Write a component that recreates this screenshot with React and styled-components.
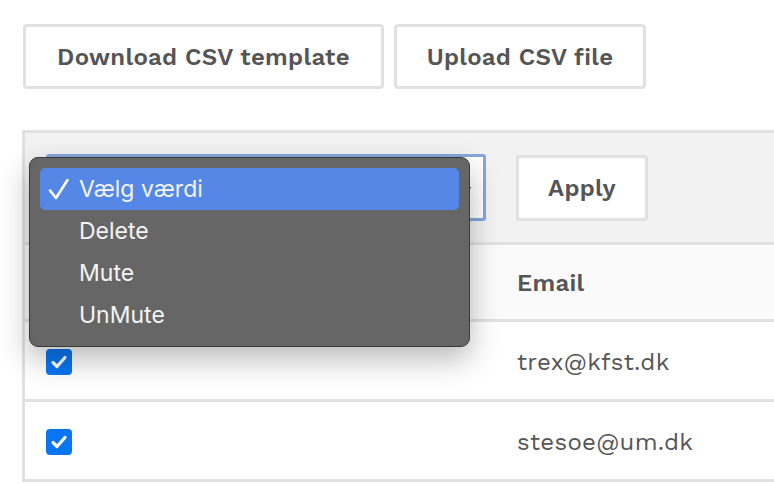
import React from "react";
import styled, { createGlobalStyle } from "styled-components";

const GlobalStyle = createGlobalStyle`
  html, body {
    margin: 0;
    padding: 0;
    background: #fff;
    overflow: hidden;
  }
  * {
    box-sizing: border-box;
  }
`;

const actions = ["Vælg værdi", "Delete", "Mute", "UnMute"];
const emails = ["trex@kfst.dk", "stesoe@um.dk"];

const App = () => {
  return (
    <Page>
      <GlobalStyle />
      <ButtonRow>
        <Button $w={361}>Download CSV template</Button>
        <Button $w={252}>Upload CSV file</Button>
      </ButtonRow>
      <Table>
        <Toolbar>
          <SelectBox>
            <Chevron viewBox="0 0 10 10">
              <path d="M2 4l3 3 3-3" fill="none" stroke="#666" strokeWidth="1.2" />
            </Chevron>
          </SelectBox>
          <Button $w={132} $h={66}>Apply</Button>
          <Menu>
            {actions.map((a, i) => (
              <MenuItem key={a} $active={i === 0}>
                <Check>
                  {i === 0 && (
                    <svg width="22" height="22" viewBox="0 0 22 22">
                      <path
                        d="M2 12.5l6 7.5L19.5 2"
                        fill="none"
                        stroke="#fff"
                        strokeWidth="2.6"
                        strokeLinecap="round"
                        strokeLinejoin="round"
                      />
                    </svg>
                  )}
                </Check>
                {a}
              </MenuItem>
            ))}
          </Menu>
        </Toolbar>
        <HeaderRow>
          <Cell />
          <HeadCell>Email</HeadCell>
        </HeaderRow>
        {emails.map((e) => (
          <Row key={e}>
            <Cell>
              <Checkbox>
                <svg width="18" height="16" viewBox="0 0 18 16">
                  <path
                    d="M3 8.5l4 4L15 3.5"
                    fill="none"
                    stroke="#fff"
                    strokeWidth="3.2"
                    strokeLinecap="round"
                    strokeLinejoin="round"
                  />
                </svg>
              </Checkbox>
            </Cell>
            <Cell>{e}</Cell>
          </Row>
        ))}
      </Table>
    </Page>
  );
};

const Page = styled.div`
  padding: 24px 0 0 22px;
  font-family: "Work Sans", "Open Sans", sans-serif;
  color: #555;
  width: 900px;
`;

const ButtonRow = styled.div`
  display: flex;
  gap: 10px;
  margin-left: 1px;
  margin-bottom: 41px;
`;

const Button = styled.button`
  width: ${(p) => p.$w}px;
  height: ${(p) => p.$h || 65}px;
  padding: 0;
  background: #fff;
  border: 3px solid #e1e1e1;
  border-radius: 4px;
  font-family: inherit;
  font-size: 24px;
  font-weight: 600;
  color: #555;
  letter-spacing: 0.3px;
`;

const Table = styled.div`
  border-left: 3px solid #e1e1e1;
  border-top: 3px solid #e1e1e1;
`;

const Toolbar = styled.div`
  position: relative;
  display: flex;
  align-items: center;
  gap: 30px;
  height: 112px;
  padding: 0 21px;
  background: #f2f2f2;
  border-bottom: 3px solid #e1e1e1;
`;

const SelectBox = styled.div`
  position: relative;
  width: 440px;
  height: 67px;
  background: #fff;
  border: 3px solid #86a6dc;
  border-radius: 3px;
`;

const Chevron = styled.svg`
  position: absolute;
  right: 10px;
  top: 26px;
  width: 10px;
  height: 10px;
`;

const Menu = styled.div`
  position: absolute;
  left: 4px;
  top: 24px;
  width: 441px;
  height: 190px;
  padding: 10px 10px;
  background: #666;
  border: 1px solid #3a3a3a;
  border-radius: 9px;
  box-shadow: 0 12px 30px rgba(0, 0, 0, 0.28);
  font-family: "Inter", "Liberation Sans", sans-serif;
  z-index: 2;
`;

const MenuItem = styled.div`
  display: flex;
  align-items: center;
  height: 42px;
  padding-left: 8px;
  border-radius: 5px;
  background: ${(p) => (p.$active ? "#5587e7" : "transparent")};
  color: #f4f4f4;
  font-size: 23px;
`;

const Check = styled.span`
  display: flex;
  align-items: center;
  width: 31px;
`;

const Grid = styled.div`
  display: grid;
  grid-template-columns: 471px 1fr;
  align-items: center;
  border-bottom: 3px solid #e1e1e1;
`;

const HeaderRow = styled(Grid)`
  height: 77px;
  background: #fafafa;
`;

const Row = styled(Grid)`
  height: 80px;
  background: #fff;
`;

const Cell = styled.div`
  padding-left: 21px;
  padding-top: 2px;
  font-size: 24px;
  color: #555;
  display: flex;
  align-items: center;
  letter-spacing: 0.3px;
`;

const HeadCell = styled(Cell)`
  font-weight: 600;
  letter-spacing: 0.3px;
`;

const Checkbox = styled.span`
  display: inline-flex;
  align-items: center;
  justify-content: center;
  width: 26px;
  height: 26px;
  border-radius: 4px;
  background: #0a75f0;
`;

export default App;
